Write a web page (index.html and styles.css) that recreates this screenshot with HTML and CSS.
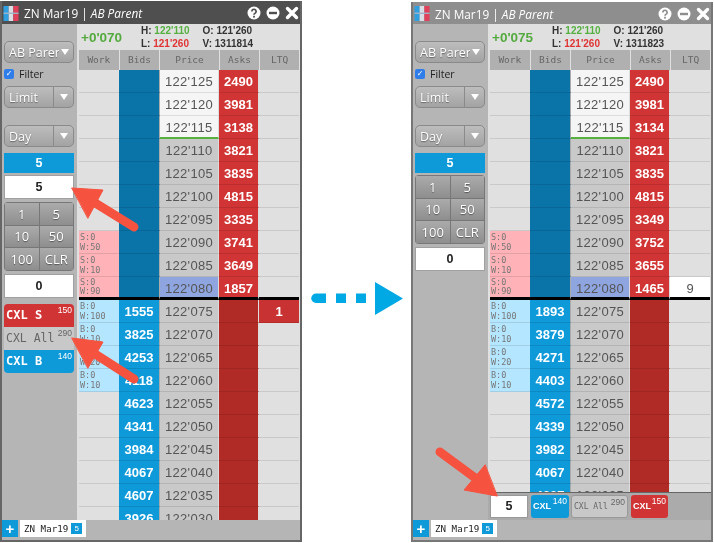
FILE: index.html
```html
<!DOCTYPE html>
<html lang="en">
<head>
<meta charset="utf-8">
<title>ZN Mar19 ladder</title>
<link rel="stylesheet" href="styles.css">
</head>
<body>
<section class="win win-a">
  <header class="title">
    <svg class="flag" viewBox="0 0 16 16"><rect width="5.5" height="16" fill="#2f9fe0"/><rect x="5.5" width="5" height="16" fill="#d9dde4"/><rect x="10.5" width="5.5" height="16" fill="#e0405a"/><rect y="7" width="16" height="1.5" fill="#9fb4c8"/></svg>
    <span class="title-text">ZN Mar19 | <i>AB Parent</i></span>
    <span class="title-icons">
      <svg viewBox="0 0 14 14"><circle cx="7" cy="7" r="6.5" fill="#fff"/><path d="M4.9 5.4a2.1 2.1 0 1 1 3.3 1.7c-.8.5-1.2.9-1.2 1.7" fill="none" stroke="#4f4f4f" stroke-width="1.7"/><rect x="6.1" y="9.8" width="1.8" height="1.8" fill="#4f4f4f"/></svg>
      <svg viewBox="0 0 14 14"><circle cx="7" cy="7" r="6.5" fill="#fff"/><rect x="3" y="5.8" width="8" height="2.4" fill="#4f4f4f"/></svg>
      <svg viewBox="0 0 14 14"><path d="M2.5 2.5l9 9M11.5 2.5l-9 9" stroke="#fff" stroke-width="3.4" stroke-linecap="round"/></svg>
    </span>
  </header>
  <div class="body">
    <aside class="side">
      <div class="btn drop-full"><span class="clip">AB Parent</span><b class="tri"></b></div>
      <label class="filter"><span class="check">✓</span>Filter</label>
      <div class="btn split"><span>Limit</span><b class="split-arrow"><b class="tri"></b></b></div>
      <div class="btn split day"><span>Day</span><b class="split-arrow"><b class="tri"></b></b></div>
      <div class="qty">5</div>
      <div class="field">5</div>
      <div class="keys"><span>1</span><span>5</span><span>10</span><span>50</span><span>100</span><span>CLR</span></div>
      <div class="field">0</div>
      <div class="cxl-stack">
        <div class="cxl red">CXL S<sup>150</sup></div>
        <div class="cxl grey">CXL All<sup>290</sup></div>
        <div class="cxl blue">CXL B<sup>140</sup></div>
      </div>
    </aside>
    <main class="main">
      <div class="stats">
        <span class="net">+0'070</span>
        <div class="hl"><span>H: <em class="g">122'110</em></span><span>L: <em class="r">121'260</em></span></div>
        <div class="ov"><span>O: 121'260</span><span>V: 1311814</span></div>
      </div>
      <div class="heads"><span>Work</span><span>Bids</span><span class="hp">Price</span><span>Asks</span><span>LTQ</span></div>
      <div class="ladder">
        <div class="row"><i class="work"></i><i class="bid"></i><i class="price hi">122'125</i><i class="ask">2490</i><i class="ltq"></i></div>
        <div class="row"><i class="work"></i><i class="bid"></i><i class="price hi">122'120</i><i class="ask">3981</i><i class="ltq"></i></div>
        <div class="row"><i class="work"></i><i class="bid"></i><i class="price hi high">122'115</i><i class="ask">3138</i><i class="ltq"></i></div>
        <div class="row"><i class="work"></i><i class="bid"></i><i class="price">122'110</i><i class="ask">3821</i><i class="ltq"></i></div>
        <div class="row"><i class="work"></i><i class="bid"></i><i class="price">122'105</i><i class="ask">3835</i><i class="ltq"></i></div>
        <div class="row"><i class="work"></i><i class="bid"></i><i class="price">122'100</i><i class="ask">4815</i><i class="ltq"></i></div>
        <div class="row"><i class="work"></i><i class="bid"></i><i class="price">122'095</i><i class="ask">3335</i><i class="ltq"></i></div>
        <div class="row"><i class="work sell">S:0<br>W:50</i><i class="bid"></i><i class="price">122'090</i><i class="ask">3741</i><i class="ltq"></i></div>
        <div class="row"><i class="work sell">S:0<br>W:10</i><i class="bid"></i><i class="price">122'085</i><i class="ask">3649</i><i class="ltq"></i></div>
        <div class="row inside"><i class="work sell">S:0<br>W:90</i><i class="bid"></i><i class="price last">122'080</i><i class="ask">1857</i><i class="ltq"></i></div>
        <div class="row"><i class="work buy">B:0<br>W:100</i><i class="bid on">1555</i><i class="price">122'075</i><i class="ask off"></i><i class="ltq trade">1</i></div>
        <div class="row"><i class="work buy">B:0<br>W:10</i><i class="bid on">3825</i><i class="price">122'070</i><i class="ask off"></i><i class="ltq"></i></div>
        <div class="row"><i class="work buy">B:0<br>W:20</i><i class="bid on">4253</i><i class="price">122'065</i><i class="ask off"></i><i class="ltq"></i></div>
        <div class="row"><i class="work buy">B:0<br>W:10</i><i class="bid on">4118</i><i class="price">122'060</i><i class="ask off"></i><i class="ltq"></i></div>
        <div class="row"><i class="work"></i><i class="bid on">4623</i><i class="price">122'055</i><i class="ask off"></i><i class="ltq"></i></div>
        <div class="row"><i class="work"></i><i class="bid on">4341</i><i class="price">122'050</i><i class="ask off"></i><i class="ltq"></i></div>
        <div class="row"><i class="work"></i><i class="bid on">3984</i><i class="price">122'045</i><i class="ask off"></i><i class="ltq"></i></div>
        <div class="row"><i class="work"></i><i class="bid on">4067</i><i class="price">122'040</i><i class="ask off"></i><i class="ltq"></i></div>
        <div class="row"><i class="work"></i><i class="bid on">4607</i><i class="price">122'035</i><i class="ask off"></i><i class="ltq"></i></div>
        <div class="row"><i class="work"></i><i class="bid on">3926</i><i class="price">122'030</i><i class="ask off"></i><i class="ltq"></i></div>
      </div>
    </main>
  </div>
  <footer class="tabs">
    <span class="plus">+</span>
    <span class="tab">ZN Mar19<b>5</b></span>
  </footer>
</section>

<section class="win win-b">
  <header class="title">
    <svg class="flag" viewBox="0 0 16 16"><rect width="5.5" height="16" fill="#2f9fe0"/><rect x="5.5" width="5" height="16" fill="#d9dde4"/><rect x="10.5" width="5.5" height="16" fill="#e0405a"/><rect y="7" width="16" height="1.5" fill="#9fb4c8"/></svg>
    <span class="title-text">ZN Mar19 | <i>AB Parent</i></span>
    <span class="title-icons">
      <svg viewBox="0 0 14 14"><circle cx="7" cy="7" r="6.5" fill="#fff"/><path d="M4.9 5.4a2.1 2.1 0 1 1 3.3 1.7c-.8.5-1.2.9-1.2 1.7" fill="none" stroke="#8e8e8e" stroke-width="1.7"/><rect x="6.1" y="9.8" width="1.8" height="1.8" fill="#8e8e8e"/></svg>
      <svg viewBox="0 0 14 14"><circle cx="7" cy="7" r="6.5" fill="#fff"/><rect x="3" y="5.8" width="8" height="2.4" fill="#8e8e8e"/></svg>
      <svg viewBox="0 0 14 14"><path d="M2.5 2.5l9 9M11.5 2.5l-9 9" stroke="#fff" stroke-width="3.4" stroke-linecap="round"/></svg>
    </span>
  </header>
  <div class="body">
    <aside class="side">
      <div class="btn drop-full"><span class="clip">AB Parent</span><b class="tri"></b></div>
      <label class="filter"><span class="check">✓</span>Filter</label>
      <div class="btn split"><span>Limit</span><b class="split-arrow"><b class="tri"></b></b></div>
      <div class="btn split day"><span>Day</span><b class="split-arrow"><b class="tri"></b></b></div>
      <div class="qty">5</div>
      <div class="keys"><span>1</span><span>5</span><span>10</span><span>50</span><span>100</span><span>CLR</span></div>
      <div class="field">0</div>
    </aside>
    <main class="main">
      <div class="stats">
        <span class="net">+0'075</span>
        <div class="hl"><span>H: <em class="g">122'110</em></span><span>L: <em class="r">121'260</em></span></div>
        <div class="ov"><span>O: 121'260</span><span>V: 1311823</span></div>
      </div>
      <div class="heads"><span>Work</span><span>Bids</span><span class="hp">Price</span><span>Asks</span><span>LTQ</span></div>
      <div class="ladder">
        <div class="row"><i class="work"></i><i class="bid"></i><i class="price hi">122'125</i><i class="ask">2490</i><i class="ltq"></i></div>
        <div class="row"><i class="work"></i><i class="bid"></i><i class="price hi">122'120</i><i class="ask">3981</i><i class="ltq"></i></div>
        <div class="row"><i class="work"></i><i class="bid"></i><i class="price hi high">122'115</i><i class="ask">3134</i><i class="ltq"></i></div>
        <div class="row"><i class="work"></i><i class="bid"></i><i class="price">122'110</i><i class="ask">3821</i><i class="ltq"></i></div>
        <div class="row"><i class="work"></i><i class="bid"></i><i class="price">122'105</i><i class="ask">3835</i><i class="ltq"></i></div>
        <div class="row"><i class="work"></i><i class="bid"></i><i class="price">122'100</i><i class="ask">4815</i><i class="ltq"></i></div>
        <div class="row"><i class="work"></i><i class="bid"></i><i class="price">122'095</i><i class="ask">3349</i><i class="ltq"></i></div>
        <div class="row"><i class="work sell">S:0<br>W:50</i><i class="bid"></i><i class="price">122'090</i><i class="ask">3752</i><i class="ltq"></i></div>
        <div class="row"><i class="work sell">S:0<br>W:10</i><i class="bid"></i><i class="price">122'085</i><i class="ask">3655</i><i class="ltq"></i></div>
        <div class="row inside"><i class="work sell">S:0<br>W:90</i><i class="bid"></i><i class="price last">122'080</i><i class="ask">1465</i><i class="ltq lastq">9</i></div>
        <div class="row"><i class="work buy">B:0<br>W:100</i><i class="bid on">1893</i><i class="price">122'075</i><i class="ask off"></i><i class="ltq"></i></div>
        <div class="row"><i class="work buy">B:0<br>W:10</i><i class="bid on">3879</i><i class="price">122'070</i><i class="ask off"></i><i class="ltq"></i></div>
        <div class="row"><i class="work buy">B:0<br>W:20</i><i class="bid on">4271</i><i class="price">122'065</i><i class="ask off"></i><i class="ltq"></i></div>
        <div class="row"><i class="work buy">B:0<br>W:10</i><i class="bid on">4403</i><i class="price">122'060</i><i class="ask off"></i><i class="ltq"></i></div>
        <div class="row"><i class="work"></i><i class="bid on">4572</i><i class="price">122'055</i><i class="ask off"></i><i class="ltq"></i></div>
        <div class="row"><i class="work"></i><i class="bid on">4339</i><i class="price">122'050</i><i class="ask off"></i><i class="ltq"></i></div>
        <div class="row"><i class="work"></i><i class="bid on">3982</i><i class="price">122'045</i><i class="ask off"></i><i class="ltq"></i></div>
        <div class="row"><i class="work"></i><i class="bid on">4067</i><i class="price">122'040</i><i class="ask off"></i><i class="ltq"></i></div>
        <div class="row"><i class="work"></i><i class="bid on">4607</i><i class="price">122'035</i><i class="ask off"></i><i class="ltq"></i></div>
      </div>
      <div class="foot">
        <div class="foot-field">5</div>
        <div class="fbtn blue">CXL<sup>140</sup></div>
        <div class="fbtn grey wide">CXL All<sup>290</sup></div>
        <div class="fbtn red">CXL<sup>150</sup></div>
      </div>
    </main>
  </div>
  <footer class="tabs">
    <span class="plus">+</span>
    <span class="tab">ZN Mar19<b>5</b></span>
  </footer>
</section>

<svg class="overlay" viewBox="0 0 714 543">
  <g fill="#00a8e4">
    <path d="M316 293.500h10v9.500h-10a4.750 4.750 0 0 1 0-9.500z"/>
    <rect x="336" y="293.500" width="10" height="9.500"/>
    <rect x="356" y="293.500" width="10" height="9.500"/>
    <path d="M375 282l28 16.500-28 16.500z"/>
  </g>
  <g class="callout">
    <path d="M134 227L92 201" />
    <path class="head" d="M72 188l31 2-15 28z"/>
    <path d="M134 379L92 352" />
    <path class="head" d="M72 338l31 4-15 26z"/>
    <path d="M440 452L478 480" />
    <path class="head" d="M497 496l-33-6 21-25z"/>
  </g>
</svg>
</body>
</html>
```
FILE: styles.css
```css
* { box-sizing: border-box; }
html, body { margin: 0; padding: 0; }
body {
  width: 714px;
  height: 543px;
  overflow: hidden;
  background: #fff;
  display: flex;
  align-items: flex-end;
  gap: 109px;
  padding-bottom: 1px;
  position: relative;
  font-family: "Liberation Sans", Arial, sans-serif;
}
i, em { font-style: normal; }

.win {
  width: 302px;
  display: flex;
  flex-direction: column;
  border: 2px solid #666;
  border-top: 0;
  background: #b5b5b5;
  filter: blur(0.3px);
}
.win-a { height: 541px; }
.win-b { height: 540px; border-color: #777; }

.title {
  height: 23px;
  flex: none;
  display: flex;
  align-items: center;
  padding: 0 1px 0 1px;
  background: #4f4f4f;
  color: #fff;
}
.win-a .title { border-top: 1px solid #4f4f4f; }
.win-b .title { height: 22px; background: #8e8e8e; padding-top: 1px; }
.flag { width: 16px; height: 15px; margin-right: 5px; flex: none; }
.title-text { font: 11.8px "Open Sans", sans-serif; white-space: nowrap; }
.title-text i { font-style: italic; }
.title-icons { margin-left: auto; display: flex; gap: 5px; }
.title-icons svg { width: 14px; height: 14px; display: block; }

.body { flex: 1; min-height: 0; display: flex; }

.side {
  width: 75px;
  flex: none;
  padding: 17px 3px 0 2px;
  background: #b5b5b5;
}
.btn {
  height: 22px;
  display: flex;
  align-items: center;
  border: 1px solid #8a8a8a;
  border-radius: 5px;
  background: linear-gradient(#bdbdbd, #a3a3a3);
  color: #fff;
  font: 12.5px "Open Sans", sans-serif;
  text-shadow: 0 1px 1px #666;
}
.drop-full { padding: 0 4px; justify-content: space-between; }
.clip { width: 50px; overflow: hidden; white-space: nowrap; }
.tri {
  display: block;
  width: 0; height: 0;
  border-left: 4px solid transparent;
  border-right: 4px solid transparent;
  border-top: 6px solid #fff;
  flex: none;
}
.filter {
  height: 18px;
  margin: 2px 0 3px;
  display: flex;
  align-items: center;
  gap: 5px;
  font: 10.5px "Open Sans", sans-serif;
  color: #222;
}
.check {
  width: 10px; height: 10px;
  border-radius: 2px;
  background: #2f7de8;
  color: #fff;
  font: bold 8px/10px "DejaVu Sans", sans-serif;
  text-align: center;
}
.split { padding-left: 4px; justify-content: space-between; }
.split-arrow {
  width: 20px; height: 100%;
  display: flex; align-items: center; justify-content: center;
  border-left: 1px solid #8a8a8a;
}
.day { margin-top: 17px; }
.qty {
  height: 20px;
  margin-top: 6px;
  background: #0e99d9;
  color: #fff;
  font: bold 12.5px/20px "Liberation Sans", sans-serif;
  text-align: center;
}
.field {
  height: 24px;
  margin-top: 2px;
  background: #fff;
  border: 1px solid #a0a0a0;
  color: #222;
  font: bold 12.5px/22px "Liberation Sans", sans-serif;
  text-align: center;
}
.keys {
  height: 69px;
  margin-top: 3px;
  display: grid;
  grid-template-columns: 1fr 1fr;
  grid-auto-rows: 1fr;
  gap: 1px;
  padding: 1px;
  border-radius: 4px;
  background: #777;
}
.keys + .field { margin-top: 3px; }
.win-b .keys { margin-top: 2px; }
.keys span {
  display: flex; align-items: center; justify-content: center;
  background: linear-gradient(#ababab, #8e8e8e);
  color: #fff;
  font: 13px "Open Sans", sans-serif;
  text-shadow: 0 1px 1px #555;
}
.cxl-stack { margin-top: 6px; border-radius: 4px; overflow: hidden; }
.cxl {
  position: relative;
  height: 23px;
  padding-left: 2px;
  font: bold 12px/23px "DejaVu Sans Mono", monospace;
  color: #fff;
}
.cxl.grey { background: #c8c8c8; color: #666; font-weight: normal; font-size: 11.5px; }
.red { background: #d13434; }
.blue { background: #0e99d9; }
.grey { background: #c8c8c8; }
sup {
  position: absolute;
  top: 1px; right: 2px;
  font: 8.5px/10px "Liberation Sans", sans-serif;
}

.main {
  flex: 1;
  min-width: 0;
  display: flex;
  flex-direction: column;
  background: #e0e0e0;
}
.stats {
  height: 26px;
  flex: none;
  display: flex;
  align-items: center;
  padding-left: 4px;
  font: bold 10px "Liberation Sans", sans-serif;
  color: #333;
}
.net { width: 60px; font: bold 13.5px "Liberation Sans", sans-serif; color: #55aa3f; }
.hl, .ov { display: flex; flex-direction: column; line-height: 13px; white-space: nowrap; }
.ov { margin-left: 13px; }
.g { color: #55b040; }
.r { color: #e03434; }

.heads {
  height: 20px;
  flex: none;
  display: flex;
  margin-left: 2px;
  width: 220px;
}
.heads span {
  width: 40px;
  margin-right: 1px;
  background: #b0b0b0;
  color: #666;
  font: 9.5px/20px "DejaVu Sans Mono", monospace;
  text-align: center;
}
.heads .hp { width: 59px; }
.heads span:last-child { width: 39px; margin-right: 0; }

.ladder { flex: 1; min-height: 0; overflow: hidden; padding-left: 2px; }
.row { display: flex; width: 220px; height: 23px; }
.row i {
  display: block;
  border-bottom: 1px solid rgba(0, 0, 0, .1);
  text-align: center;
  white-space: nowrap;
}
.work { width: 40px; color: #777; font: 8.5px/10px "DejaVu Sans Mono", monospace; padding: 1px 0 0 1px; text-align: left !important; }
.sell { background: #ffb3b8; }
.buy { background: #b5e6ff; }
.bid { width: 41px; border-right: 1px solid #aaa; background: #0a73a8; color: #fff; font: bold 13px/24px "Liberation Sans", sans-serif; }
.bid.on { background: #0e99d9; }
.price { width: 59px; border-right: 1px solid #ddd; background: #c9c9c9; color: #555; font: 13px/24px "Liberation Sans", sans-serif; letter-spacing: .3px; }
.price.hi { background: #f5f5f5; }
.price.high { border-bottom: 2px solid #55b040 !important; }
.price.last { background: #8fa5e0; }
.ask { width: 40px; border-right: 1px solid #ddd; background: #d13434; color: #fff; font: bold 13px/24px "Liberation Sans", sans-serif; }
.ask.off { background: #b02a26; }
.ltq { width: 40px; color: #555; font: 13px/24px "Liberation Sans", sans-serif; }
.trade { background: #c93232; color: #fff; font-weight: bold; }
.lastq { background: #fff; }
.row.inside i { border-bottom: 3px solid #000; }
.row.inside .work { line-height: 9px; }

.foot {
  height: 28px;
  flex: none;
  display: flex;
  align-items: center;
  gap: 3px;
  padding: 0 0 0 2px;
  background: #ababab;
  border-top: 1px solid #666;
}
.foot-field {
  width: 38px; height: 23px;
  background: #fff;
  border: 1px solid #999;
  color: #222;
  font: bold 12.5px/21px "Liberation Sans", sans-serif;
  text-align: center;
}
.fbtn {
  position: relative;
  width: 38px; height: 23px;
  padding-left: 2px;
  border-radius: 3px;
  color: #fff;
  font: bold 9px/23px "Liberation Sans", sans-serif;
}
.fbtn.grey { background: #c8c8c8; color: #666; border: 1px solid #999; font: 8px/21px "DejaVu Sans Mono", monospace; margin-left: -1px; }
.wide { width: 57px; }
.fbtn.red { width: 37px; }

.tabs {
  height: 20px;
  flex: none;
  display: flex;
  gap: 2px;
  background: #b5b5b5;
}
.plus {
  width: 16px; height: 17px;
  background: #0e99d9;
  color: #fff;
  font: bold 15px/17px "Liberation Sans", sans-serif;
  text-align: center;
}
.tab {
  width: 66px; height: 17px;
  padding-left: 4px;
  display: flex;
  align-items: center;
  background: #fff;
  color: #222;
  font: 9.2px "DejaVu Sans Mono", monospace;
  white-space: nowrap;
}
.tab b {
  width: 11px; height: 11px;
  margin-left: 3px;
  background: #0e99d9;
  color: #fff;
  font: 8px/11px "Liberation Sans", sans-serif;
  text-align: center;
}

.overlay {
  position: absolute;
  left: 0; top: 0;
  width: 714px; height: 543px;
  pointer-events: none;
}
.callout path {
  fill: none;
  stroke: #f5533f;
  stroke-width: 9;
  stroke-linecap: round;
}
.callout .head { fill: #f5533f; stroke-width: 1; stroke-linejoin: round; }
```
